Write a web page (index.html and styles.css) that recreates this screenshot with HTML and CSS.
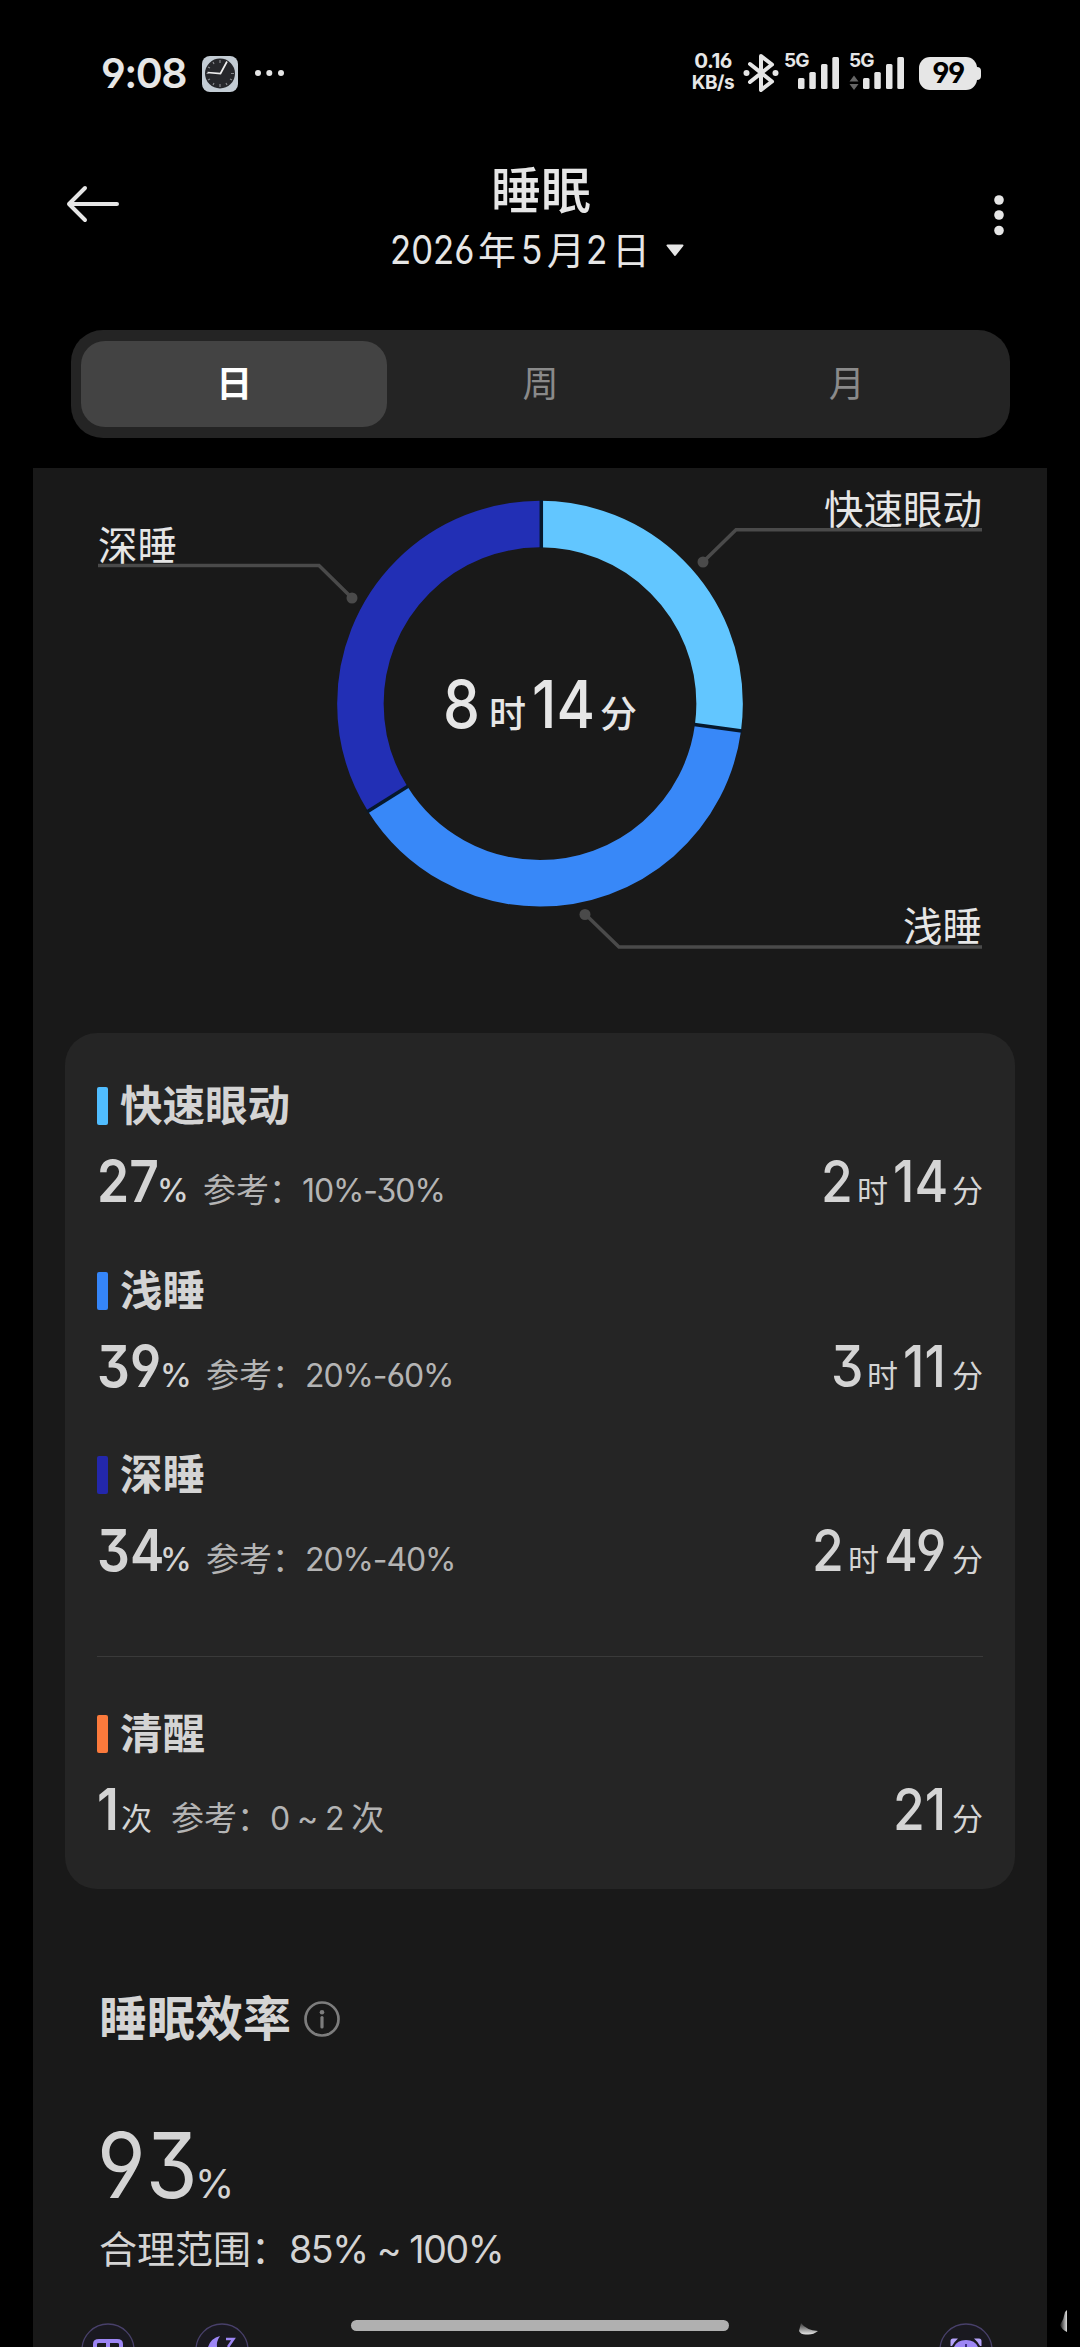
FILE: index.html
```html
<!DOCTYPE html>
<html lang="zh-CN">
<head>
<meta charset="utf-8">
<title>睡眠</title>
<link rel="stylesheet" href="styles.css">
</head>
<body>
<div class="screen">
  <header class="status">
    <span class="clock">9:08</span>
    <svg class="clock-app" width="36" height="36" viewBox="0 0 36 36">
      <rect width="36" height="36" rx="8" fill="#c3ccd4"/>
      <circle cx="18" cy="17.500" r="15" fill="#26272b"/>
      <g stroke="#85878b" stroke-width="1.200"><path d="M18 4v3M18 28v3M4.500 17.500h2M29 17.500h3M11 6l1 2M25 29l-1-2M6 11l2 1M30 24l-2-1M6 24l2-1M11 29l1-2"/></g>
      <path d="M5.500 16.500L18.500 17.500L25 5.500" fill="none" stroke="#eee" stroke-width="1.700"/>
    </svg>
    <svg class="more" width="30" height="8" viewBox="0 0 30 8" fill="#e6e6e6"><circle cx="4" cy="4" r="3"/><circle cx="15.300" cy="4" r="3"/><circle cx="27" cy="4" r="3"/></svg>
    <div class="speed"><span class="rate">0.16</span><span class="unit">KB/s</span></div>
    <svg class="bt" width="36" height="40" viewBox="0 0 36 40">
      <path d="M7 11L29 28.500L18 37V3L29 11.500L7 29" fill="none" stroke="#e6e6e6" stroke-width="4" stroke-linejoin="round" stroke-linecap="round"/>
      <circle cx="3.500" cy="20" r="3" fill="#e6e6e6"/><circle cx="32.500" cy="20" r="3" fill="#e6e6e6"/>
    </svg>
    <div class="sig">
      <span class="gen">5G</span>
      <svg width="56" height="40" viewBox="0 0 56 40" fill="#e6e6e6"><rect x="14" y="25" width="6.500" height="11" rx="1.500"/><rect x="25.300" y="19" width="6.500" height="17" rx="1.500"/><rect x="37" y="11" width="6.500" height="25" rx="1.500"/><rect x="48.300" y="4" width="6.700" height="32" rx="1.500"/></svg>
    </div>
    <div class="sig sig2">
      <span class="gen">5G</span>
      <svg width="56" height="40" viewBox="0 0 56 40" fill="#e6e6e6"><rect x="14" y="25" width="6.500" height="11" rx="1.500"/><rect x="25.300" y="19" width="6.500" height="17" rx="1.500"/><rect x="37" y="11" width="6.500" height="25" rx="1.500"/><rect x="48.300" y="4" width="6.700" height="32" rx="1.500"/><path d="M0.500 28.500L5 22.500L9.500 28.500ZM0.500 31L5 37L9.500 31Z" fill="#666"/></svg>
    </div>
    <div class="battery"><span>99</span></div>
  </header>

  <nav class="topbar">
    <svg class="back" width="54" height="38" viewBox="0 0 54 38" fill="none" stroke="#e6e6e6" stroke-width="4" stroke-linecap="round" stroke-linejoin="round"><path d="M19 3L3 19L19 35M3 19H51"/></svg>
    <div class="heading">
      <h1>睡眠</h1>
      <div class="date"><span class="d y">2026</span><span>年</span><span class="d five">5</span><span>月</span><span class="d two">2</span><span>日</span>
        <svg width="20" height="13" viewBox="0 0 20 13"><path d="M2.500 1.500H17.500L10 11Z" fill="#e6e6e6" stroke="#e6e6e6" stroke-width="2" stroke-linejoin="round"/></svg></div>
    </div>
    <svg class="kebab" width="12" height="42" viewBox="0 0 12 42" fill="#e6e6e6"><circle cx="6" cy="6" r="4.800"/><circle cx="6" cy="21" r="4.800"/><circle cx="6" cy="36.500" r="4.800"/></svg>
  </nav>

  <div class="tabs"><span class="tab active">日</span><span class="tab">周</span><span class="tab">月</span></div>

  <main class="panel">
    <section class="chart">
      <svg width="1014" height="565" viewBox="33 468 1014 565">
        <g fill="none" stroke-width="46.500" transform="rotate(-90 540 703.700)">
          <circle cx="540" cy="703.700" r="179.600" pathLength="360" stroke="#62c6ff" stroke-dasharray="97.700 262.300"/>
          <circle cx="540" cy="703.700" r="179.600" pathLength="360" stroke="#3888f8" stroke-dasharray="140.300 219.700" stroke-dashoffset="-97.700"/>
          <circle cx="540" cy="703.700" r="179.600" pathLength="360" stroke="#222fb5" stroke-dasharray="122 238" stroke-dashoffset="-238"/>
        </g>
        <g stroke="#06182c" stroke-width="3.500">
          <path d="M541.300 500V548"/>
          <path d="M540 500V548" transform="rotate(97.700 540 703.700)"/>
          <path d="M540 500V548" transform="rotate(238 540 703.700)"/>
        </g>
        <g fill="none" stroke="#4a4a4a" stroke-width="3.500">
          <path d="M98 565.500H319L352 598"/><path d="M982 529.700H736L703 562"/><path d="M982 947H619L585 914"/>
        </g>
        <g fill="#4a4a4a"><circle cx="352" cy="598" r="5.500"/><circle cx="703" cy="562" r="5.500"/><circle cx="585" cy="914.500" r="5.500"/></g>
      </svg>
      <span class="lab deep">深睡</span>
      <span class="lab rem">快速眼动</span>
      <span class="lab light">浅睡</span>
      <div class="total"><b class="n n1">8</b><i>时</i><b class="n n2 one">14</b><i>分</i></div>
    </section>

    <section class="card">
      <div class="item">
        <h2><span class="mark c1"></span>快速眼动</h2>
        <div class="row"><b class="n n2">27</b><i class="pct">%</i><span class="ref">参考：<em>10%-30%</em></span>
          <div class="dur"><b class="n n1">2</b><i>时</i><b class="n n2 one">14</b><i>分</i></div></div>
      </div>
      <div class="item">
        <h2><span class="mark c2"></span>浅睡</h2>
        <div class="row"><b class="n n2 w">39</b><i class="pct">%</i><span class="ref">参考：<em>20%-60%</em></span>
          <div class="dur"><b class="n n1">3</b><i>时</i><b class="n n2 ones">11</b><i>分</i></div></div>
      </div>
      <div class="item">
        <h2><span class="mark c3"></span>深睡</h2>
        <div class="row"><b class="n n2 w">34</b><i class="pct">%</i><span class="ref">参考：<em>20%-40%</em></span>
          <div class="dur"><b class="n n1">2</b><i>时</i><b class="n n2 w">49</b><i>分</i></div></div>
      </div>
      <div class="item awake">
        <h2><span class="mark c4"></span>清醒</h2>
        <div class="row"><b class="n n0">1</b><i class="times">次</i><span class="ref">参考：<em class="loose">0 ~ 2 </em>次</span>
          <div class="dur"><b class="n n2 one">21</b><i>分</i></div></div>
      </div>
    </section>

    <section class="eff">
      <h3>睡眠效率<svg width="38" height="38" viewBox="0 0 38 38"><circle cx="19" cy="19" r="16.500" fill="none" stroke="#7d7d7d" stroke-width="2.700"/><circle cx="19" cy="12.300" r="2.300" fill="#7d7d7d"/><path d="M19 17.500V27" stroke="#7d7d7d" stroke-width="3.200" stroke-linecap="round"/></svg></h3>
      <div class="score"><b class="n">93</b><i>%</i></div>
      <p>合理范围：<em>85% ~ 100%</em></p>
    </section>

    <div class="tips">
      <svg width="54" height="24" viewBox="0 0 54 24"><circle cx="27" cy="27" r="26" fill="#1a1920" stroke="#48406a" stroke-width="1.300"/><path d="M14 24V21Q14 18 18 18H36Q40 18 40 21V24M27 18V24" fill="none" stroke="#9d86f5" stroke-width="4"/></svg>
      <svg width="54" height="24" viewBox="0 0 54 24"><circle cx="27" cy="27" r="26" fill="#1a1920" stroke="#48406a" stroke-width="1.300"/><path d="M13 24Q16 15 25 13Q21 19 22 24Z" fill="#9d86f5"/><path d="M31 16H38.500L33 24" fill="none" stroke="#9d86f5" stroke-width="2.500"/></svg>
      <svg class="alarm" width="54" height="24" viewBox="0 0 54 24"><circle cx="27" cy="27" r="26" fill="#1a1920" stroke="#48406a" stroke-width="1.300"/><path d="M11.500 23V18Q11.500 15.500 14 15.500H19Q16 18 13 23ZM42.500 23V18Q42.500 15.500 40 15.500H35Q38 18 41 23Z" fill="#b5a3fa"/><path d="M15 24Q18 17 27 17Q36 17 39 24Z" fill="#9d86f5"/><path d="M27 21V24" stroke="#3a2b80" stroke-width="2"/></svg>
    </div>
  </main>
  <div class="homebar"></div>
  <svg class="glints" width="280" height="37" viewBox="0 0 280 37">
    <defs><linearGradient id="glint" x1="0" y1="0" x2="0" y2="1"><stop offset="0" stop-color="#333"/><stop offset="1" stop-color="#e8e8e8"/></linearGradient>
    <linearGradient id="edge"><stop offset="0" stop-color="#111"/><stop offset="1" stop-color="#e0e0e0"/></linearGradient></defs>
    <path d="M2 13Q7 20 19 21Q14 25 8 24.500Q2 25 0 21Z" fill="url(#glint)"/>
    <path d="M268 0V22Q263 20 261 15Q265 9 266 2Z" fill="url(#edge)"/>
  </svg>
</div>
</body>
</html>
```
FILE: styles.css
```css
* { box-sizing: border-box; margin: 0; padding: 0; }
body { background: #000; font-family: "Inter", "Noto Sans CJK SC", sans-serif; color: #e6e6e6; font-feature-settings: "cv03", "cv04", "cv09"; }
i, em { font-style: normal; }
svg { display: block; flex: none; }
.screen { position: relative; width: 1080px; height: 2347px; overflow: hidden; background: #000; }

.status { display: flex; height: 146px; padding: 53px 0 0 101px; align-items: flex-start; }
.clock { width: 101px; font-size: 41px; font-weight: 600; line-height: 40px; letter-spacing: -1.5px; }
.clock-app { margin-top: 3px; }
.more { margin: 16px 0 0 16px; }
.speed { display: flex; flex-direction: column; align-items: center; width: 44px; margin-left: 407px; font-weight: 700; white-space: nowrap; }
.rate { font-size: 20.500px; line-height: 15px; letter-spacing: -0.5px; }
.unit { font-size: 19px; line-height: 15px; margin-top: 7px; letter-spacing: -0.5px; }
.bt { margin: 0 0 0 8px; }
.sig { position: relative; width: 56px; margin-left: 5px; }
.sig2 { margin-left: 9px; }
.gen { position: absolute; left: 0; top: 0; font-size: 19px; font-weight: 700; line-height: 15px; letter-spacing: -1px; }
.battery { position: relative; width: 58px; height: 33px; margin: 4px 0 0 14px; border-radius: 11px; background: #e6e6e6; color: #000; text-align: center; }
.battery span { font-size: 28px; font-weight: 700; line-height: 33px; letter-spacing: -1.5px; }
.battery::after { content: ""; position: absolute; right: -4px; top: 10px; width: 5px; height: 13px; border-radius: 0 4px 4px 0; background: #e6e6e6; }

.topbar { display: flex; align-items: flex-start; height: 184px; padding: 0 75px 0 66px; }
.back { margin-top: 39px; }
.heading { width: 302px; margin-left: 270px; padding-top: 17px; }
h1 { width: 302px; text-align: center; font-size: 50px; font-weight: 500; line-height: 56px; }
.date { display: flex; align-items: center; margin-top: 6px; font-size: 38px; line-height: 50px; white-space: nowrap; }
.date .d { font-size: 39px; transform: scaleX(.9); transform-origin: 0 50%; width: 26px; }
.date .y { width: 88px; transform: scaleX(.89); }
.date .five { margin-left: 5px; }
.date .two { margin-left: 1px; }
.date svg { margin-left: 15px; }
.kebab { margin: 48px 0 0 auto; }

.tabs { display: flex; width: 939px; height: 108px; margin: 0 71px; padding: 11px 10px; border-radius: 32px; background: #242424; }
.tab { flex: 1; border-radius: 24px; text-align: center; font-size: 36px; line-height: 86px; color: #8a8a8a; }
.tab.active { background: #434343; color: #fff; font-weight: 700; }

.panel { width: 1014px; height: 1879px; margin: 30px 0 0 33px; background: #191919; }
.chart { position: relative; height: 565px; }
.lab { position: absolute; font-size: 39.500px; line-height: 50px; }
.deep { left: 65px; top: 53px; }
.rem { right: 65px; top: 17px; }
.light { right: 65px; top: 434px; }
.total { position: absolute; left: 410px; top: 198px; display: flex; align-items: baseline; line-height: 76px; white-space: nowrap; }
.n { display: inline-block; font-weight: 500; transform: scaleX(.89); transform-origin: 0 100%; white-space: nowrap; }
.total .n { font-size: 66px; }
.total .n1 { width: 46px; }
.total .n2 { width: 68px; margin-left: 6px; }
.total i { font-size: 37px; font-weight: 500; }

.card { width: 950px; height: 856px; margin-left: 32px; padding: 45px 32px 0; border-radius: 32px; background: #252525; color: #d4d4d4; }
.item { height: 184.500px; }
h2 { display: flex; align-items: center; gap: 12px; height: 56px; font-size: 42.500px; font-weight: 700; line-height: 56px; }
.mark { width: 11px; height: 38px; border-radius: 2px; }
.c1 { background: #50bdff; }
.c2 { background: #3585f8; }
.c3 { background: #2327ab; }
.c4 { background: #fb7a3c; }
.row { display: flex; align-items: baseline; height: 76px; margin-top: 9px; line-height: 76px; font-size: 33px; white-space: nowrap; }
.row .n { font-size: 58px; font-weight: 600; }
.row > .n2 { width: 60px; }
.row > .w { width: 63px; }
.row > .n0 { width: 24px; }
.pct { width: 46px; font-size: 32px; font-weight: 500; }
.times { width: 50px; font-size: 31px; }
.ref { font-size: 33px; color: #b4b4b4; }
.ref em { font-size: 32px; letter-spacing: -1.1px; }
.dur { display: flex; align-items: baseline; margin-left: auto; }
.dur .n { font-weight: 500; }
.dur .n1 { width: 36px; }
.dur .n2 { width: 59px; margin-left: 5px; }
.dur .w { width: 68px; }
.dur .ones { width: 49px; }
.dur i { font-size: 31px; }
.awake { margin-top: 24px; padding-top: 49px; border-top: 1px solid #3a3a3a; }

.eff { padding: 98px 0 0 66px; height: 402px; color: #d4d4d4; }
h3 { display: flex; align-items: center; gap: 12px; font-size: 48px; font-weight: 700; line-height: 64px; }
.score { display: flex; align-items: baseline; margin-top: 59px; line-height: 110px; }
.score .n { width: 98px; font-size: 91px; font-weight: 400; transform: scaleX(.92); margin-left: -2px; }
.score i { font-size: 40px; }
.eff p { font-size: 38px; line-height: 50px; margin-top: -15px; white-space: nowrap; }
.eff em { font-size: 37.500px; letter-spacing: -1.4px; }

.tips { display: flex; margin-top: 32px; padding-left: 48px; gap: 60px; }
.tips .alarm { margin-left: 630px; }
.homebar { position: absolute; left: 351px; top: 2320px; width: 378px; height: 11px; border-radius: 6px; background: #b0b0b0; }
.glints { position: absolute; left: 799px; top: 2310px; }
```
